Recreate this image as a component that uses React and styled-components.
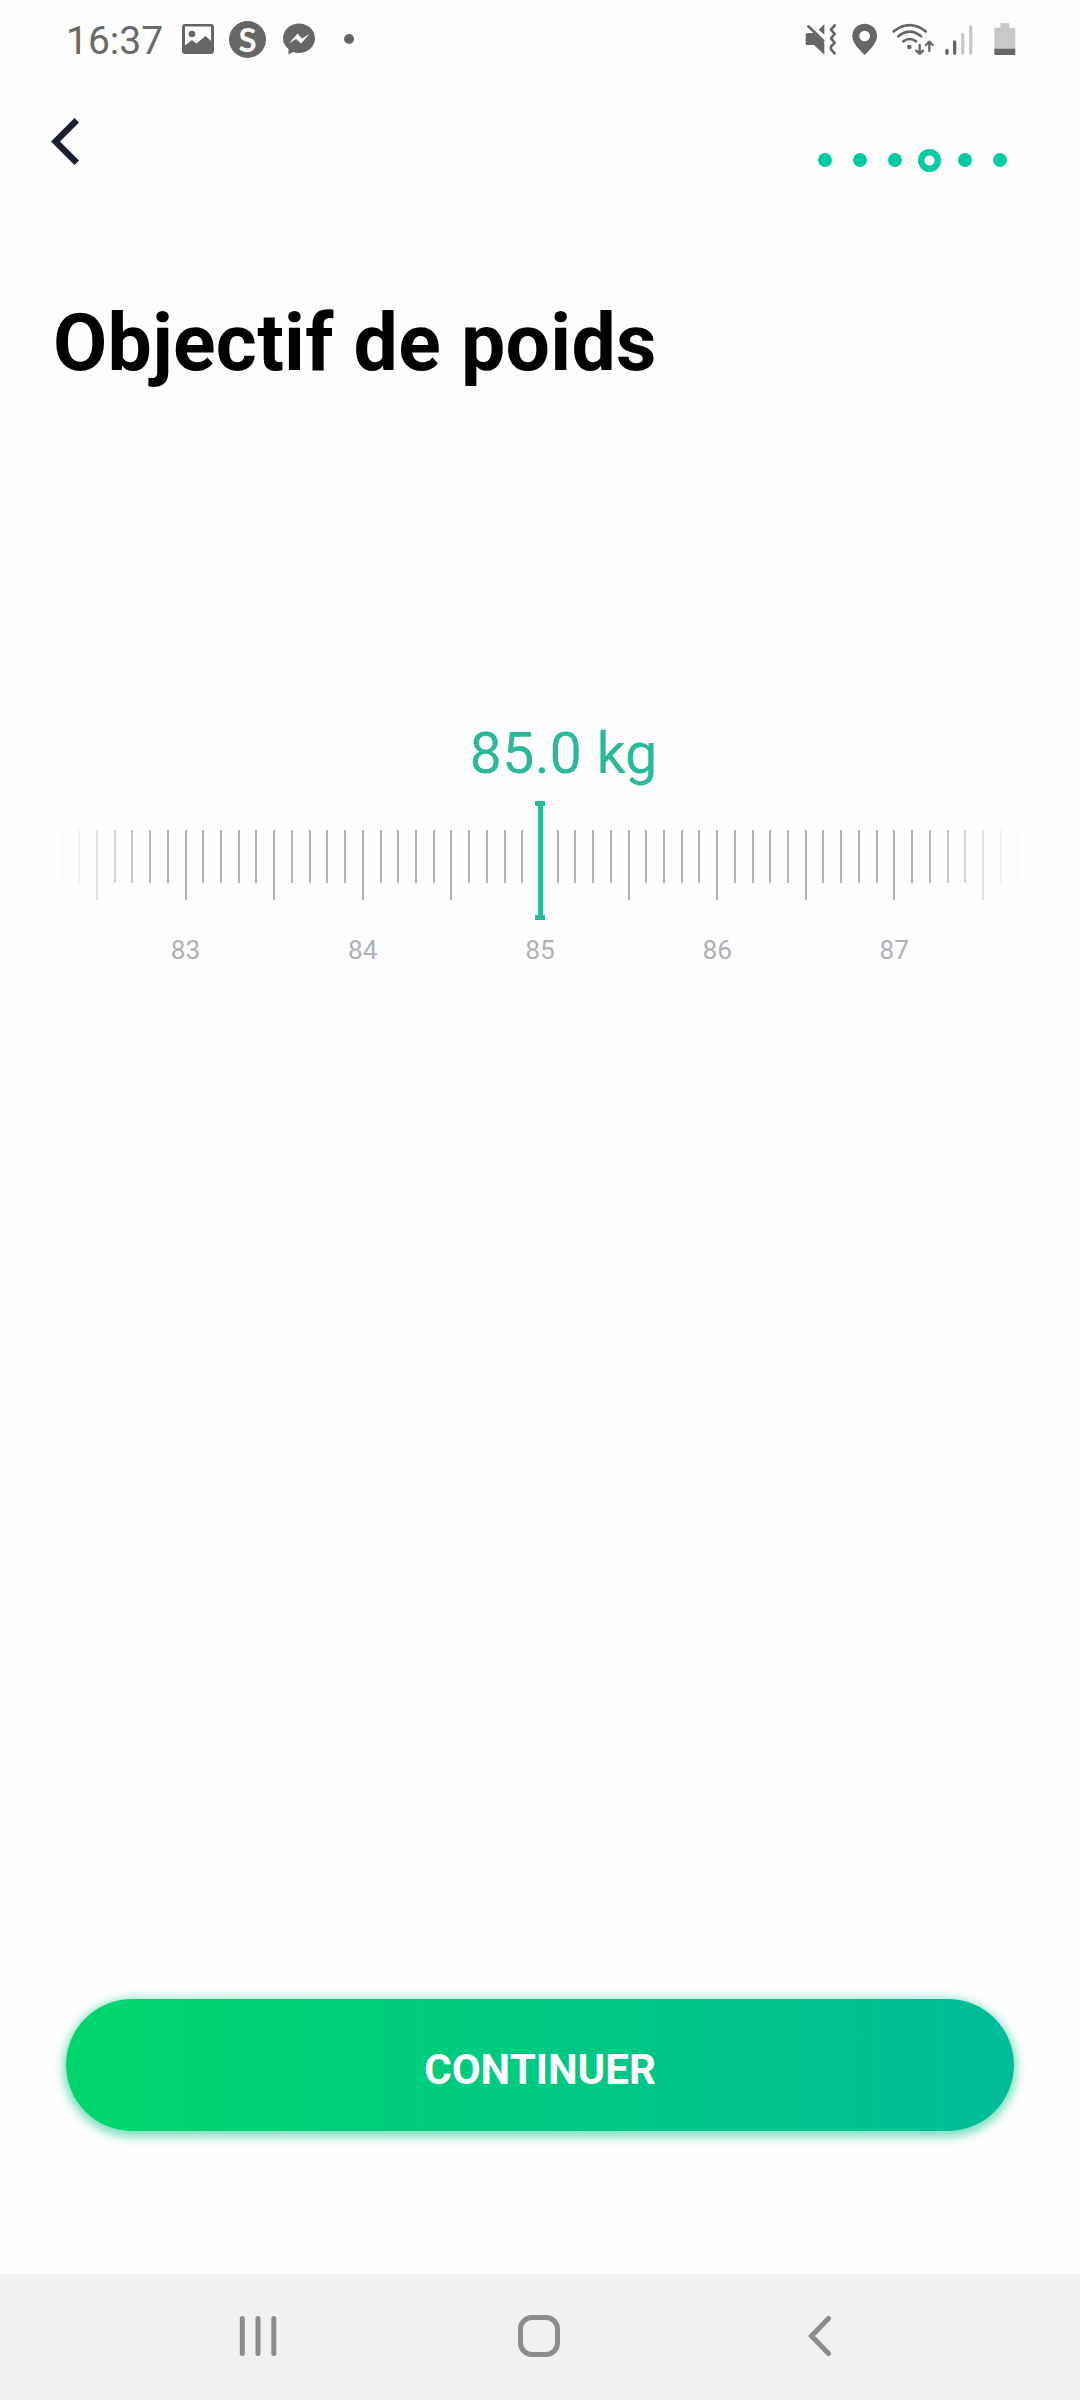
import React from 'react';
import styled, { createGlobalStyle } from 'styled-components';

const GlobalStyle = createGlobalStyle`
  * {
    box-sizing: border-box;
  }

  body {
    margin: 0;
    background-color: #fefefe;
    font-family: Roboto, sans-serif;
  }
`;

const Screen = styled.div`
  display: flex;
  flex-direction: column;
  width: 1080px;
  height: 2400px;
  background-color: #fefefe;
`;

const StatusBar = styled.div`
  display: flex;
  justify-content: space-between;
  height: 78px;
  padding: 0 64px 0 66px;
  color: #666;
`;

const StatusGroup = styled.div`
  display: flex;
  align-items: center;
`;

const Clock = styled.span`
  width: 99px;
  margin-right: 17px;
  font-size: 39px;
  font-weight: 400;
  line-height: 78px;
  padding-top: 3px;
  color: #6a6a6a;
`;

const Icon = styled.svg`
  display: block;
  flex: none;
  width: ${({ $w }) => $w}px;
  height: ${({ $h }) => $h}px;
  margin-left: ${({ $gap }) => $gap || 0}px;
`;

const AppBadge = styled.span`
  display: flex;
  align-items: center;
  justify-content: center;
  width: 37px;
  height: 37px;
  margin-left: 15px;
  border-radius: 50%;
  background-color: #666;
  color: #fefefe;
  font-family: Lato, sans-serif;
  font-size: 33px;
  font-weight: 700;
  line-height: 37px;
`;

const MoreDot = styled.span`
  width: 10px;
  height: 10px;
  margin-left: 29px;
  border-radius: 50%;
  background-color: #666;
`;

const Header = styled.header`
  display: flex;
  justify-content: space-between;
  height: 100px;
  padding: 40px 63px 0 51px;
`;

const Steps = styled.div`
  display: flex;
  align-items: center;
  height: 24px;
  margin-top: 30px;
`;

const StepSlot = styled.div`
  display: flex;
  justify-content: center;
  width: 35px;
`;

const Step = styled.span`
  width: ${({ $current }) => ($current ? 23 : 14)}px;
  height: ${({ $current }) => ($current ? 23 : 14)}px;
  background: ${({ $current }) =>
    $current ? 'radial-gradient(circle, #fefefe 4.5px, #05cba3 5.5px)' : '#05cba3'};
  border-radius: 50%;
`;

const Title = styled.h1`
  margin: 118px 0 0 53px;
  font-size: 78.75px;
  font-weight: 700;
  letter-spacing: 0.3px;
  line-height: 94px;
  color: #000;
`;

const Picker = styled.section`
  display: flex;
  flex-direction: column;
  align-items: center;
  margin-top: 328px;
`;

const Value = styled.div`
  height: 83px;
  padding-left: 47px;
  font-size: 57.75px;
  line-height: 71px;
  color: #2ab99a;
`;

const Ruler = styled.div`
  position: relative;
  display: flex;
  justify-content: center;
  width: 1080px;
  height: 119px;
  padding-top: 28.5px;
`;

const Ticks = styled.div`
  display: flex;
  width: 974.6px;
  mask-image: linear-gradient(
    to right,
    transparent 0,
    rgba(0, 0, 0, 0.15) 27px,
    rgba(0, 0, 0, 0.4) 45px,
    #000 105px,
    #000 869px,
    rgba(0, 0, 0, 0.4) 929px,
    rgba(0, 0, 0, 0.15) 947px,
    transparent 974px
  );
`;

const Tick = styled.div`
  display: flex;
  flex: 1;
  justify-content: center;

  &::after {
    content: '';
    width: 2px;
    height: ${({ $long }) => ($long ? 70 : 53)}px;
    background-color: #b3b3b5;
  }
`;

const Needle = styled.div`
  position: absolute;
  top: 0;
  left: 535px;
  display: flex;
  justify-content: center;
  width: 10px;
  height: 119px;
  border: solid #2ab99a;
  border-width: 5px 0;

  &::after {
    content: '';
    width: 5px;
    background-color: #2ab99a;
  }
`;

const Labels = styled.div`
  display: grid;
  grid-template-columns: repeat(5, 177.2px);
  margin-top: 14px;
  font-size: 26.25px;
  line-height: 32px;
  text-align: center;
  color: #b0b0b4;
`;

const Spacer = styled.div`
  flex: 1;
`;

const Button = styled.button`
  flex: none;
  width: 948px;
  height: 132px;
  margin: 0 66px 143px;
  padding: 8px 0 0;
  border: none;
  border-radius: 66px;
  background: linear-gradient(to right, #00d66c, #00bc98);
  box-shadow: 0 3px 10px 3px rgba(0, 195, 135, 0.5);
  color: #fff;
  font-family: Roboto, sans-serif;
  font-size: 42px;
  font-weight: 700;
`;

const NavBar = styled.nav`
  display: flex;
  flex: none;
  align-items: center;
  height: 126px;
  padding: 0 0 2px 239px;
  background-color: #f1f1f1;
`;

const steps = [0, 1, 2, 3, 4, 5];
const currentStep = 3;
const weights = [83, 84, 85, 86, 87];
const ticks = Array.from({ length: 55 }, (_, i) => i - 27);

const App = () => {
  return (
    <Screen>
      <GlobalStyle />
      <StatusBar>
        <StatusGroup>
          <Clock>16:37</Clock>
          <Icon $w={32} $h={30} viewBox="0 0 32 30">
            <path
              fill="#666"
              fillRule="evenodd"
              d="M3 0h26a3 3 0 0 1 3 3v24a3 3 0 0 1-3 3H3a3 3 0 0 1-3-3V3a3 3 0 0 1 3-3zM3 2.500v19l7-5.500 4.500 3.500 9-7.500 5.500 5V2.500z"
            />
            <circle cx="10" cy="10" r="3.300" fill="#666" />
          </Icon>
          <AppBadge>S</AppBadge>
          <Icon $w={32} $h={32} $gap={17} viewBox="0 0 32 32">
            <path
              fill="#666"
              d="M16 0.500C24.800 0.500 32 7 32 15.300S24.800 30 16 30c-2 0-4-.3-5.800-.9L5.500 31.500V26C2 23.500 0 19.700 0 15.300 0 7 7.200.5 16 .5z"
            />
            <path fill="#fefefe" d="M6 20.500l8.500-10 4.500 5 7.500-4.500-8.500 9.500-5-4.500z" />
          </Icon>
          <MoreDot />
        </StatusGroup>
        <StatusGroup>
          <Icon $w={32} $h={32} viewBox="75 66 96 96">
            <path
              fill="#666"
              d="M80 97l22-1 31 29v36l-31-29H80q-3 0-3-3v-29q0-3 3-3zM116 86l17-17v32z"
            />
            <g fill="none" stroke="#666" strokeLinecap="round" strokeLinejoin="round">
              <path strokeWidth="8" d="M85 76l45 43" />
              <path strokeWidth="8" d="M164 73l-11 13 11 13-11 13 11 13-11 12 0 8 11 12" />
            </g>
          </Icon>
          <Icon $w={26} $h={32} $gap={15} viewBox="215 66 78 96">
            <path
              fill="#666"
              fillRule="evenodd"
              d="M253 68a37 36 0 0 1 37 36c0 22-18 38-37 58-19-20-37-36-37-58a37 36 0 0 1 37-36zm0 21a16 16 0 1 0 0 32 16 16 0 0 0 0-32z"
            />
          </Icon>
          <Icon $w={42} $h={32} $gap={14} viewBox="335 66 126 96">
            <g fill="none" stroke="#666" strokeWidth="8" strokeLinecap="round" strokeLinejoin="round">
              <path d="M340 91q48-37 96 0M354 106q34-28 68 0M369 121q19-14 38 0" />
              <path strokeWidth="7" d="M418 132v26m-10-9l10 10 10-10M447 150v-27m-10 9l10-10 10 10" />
            </g>
            <circle cx="387" cy="138" r="7" fill="#666" />
          </Icon>
          <Icon $w={28} $h={32} $gap={11} viewBox="494 66 84 96">
            <g strokeWidth="10" strokeLinecap="round">
              <path stroke="#666" d="M500 148v9M523 123v34" />
              <path stroke="#c8c8c8" d="M547 100v57M571 78v79" />
            </g>
          </Icon>
          <Icon $w={22} $h={32} $gap={21} viewBox="641 66 66 96">
            <path
              fill="#c8c8c8"
              d="M660 67h27v13h15q3 0 3 3v62h-63V83q0-3 3-3h15z"
            />
            <path fill="#666" d="M642 143h63v15q0 4-4 4h-55q-4 0-4-4z" />
          </Icon>
        </StatusGroup>
      </StatusBar>
      <Header>
        <Icon $w={28} $h={47} viewBox="0 0 28 47">
          <path fill="#1c1f30" d="M0 23.500L23.500 0 28 4.500 9 23.500 28 42.500 23.500 47z" />
        </Icon>
        <Steps>
          {steps.map((step) => (
            <StepSlot key={step}>
              <Step $current={step === currentStep} />
            </StepSlot>
          ))}
        </Steps>
      </Header>
      <Title>Objectif de poids</Title>
      <Picker>
        <Value>85.0 kg</Value>
        <Ruler>
          <Ticks>
            {ticks.map((tick) => (
              <Tick key={tick} $long={tick % 5 === 0} />
            ))}
          </Ticks>
          <Needle />
        </Ruler>
        <Labels>
          {weights.map((weight) => (
            <span key={weight}>{weight}</span>
          ))}
        </Labels>
      </Picker>
      <Spacer />
      <Button>CONTINUER</Button>
      <NavBar>
        <Icon $w={38} $h={42} viewBox="0 0 38 42">
          <path
            stroke="#8c8c8c"
            strokeWidth="5"
            strokeLinecap="round"
            d="M3.300 3.500v35M19 3.500v35M34.800 3.500v35"
          />
        </Icon>
        <Icon $w={42} $h={42} $gap={241} viewBox="0 0 42 42">
          <rect
            x="2.500"
            y="2.500"
            width="37"
            height="37"
            rx="11.500"
            fill="none"
            stroke="#8c8c8c"
            strokeWidth="5"
          />
        </Icon>
        <Icon $w={24} $h={42} $gap={248} viewBox="0 0 24 42">
          <path
            fill="none"
            stroke="#8c8c8c"
            strokeWidth="5"
            strokeLinecap="round"
            d="M20.500 3.500L3.500 21l17 17.500"
          />
        </Icon>
      </NavBar>
    </Screen>
  );
};

export default App;
